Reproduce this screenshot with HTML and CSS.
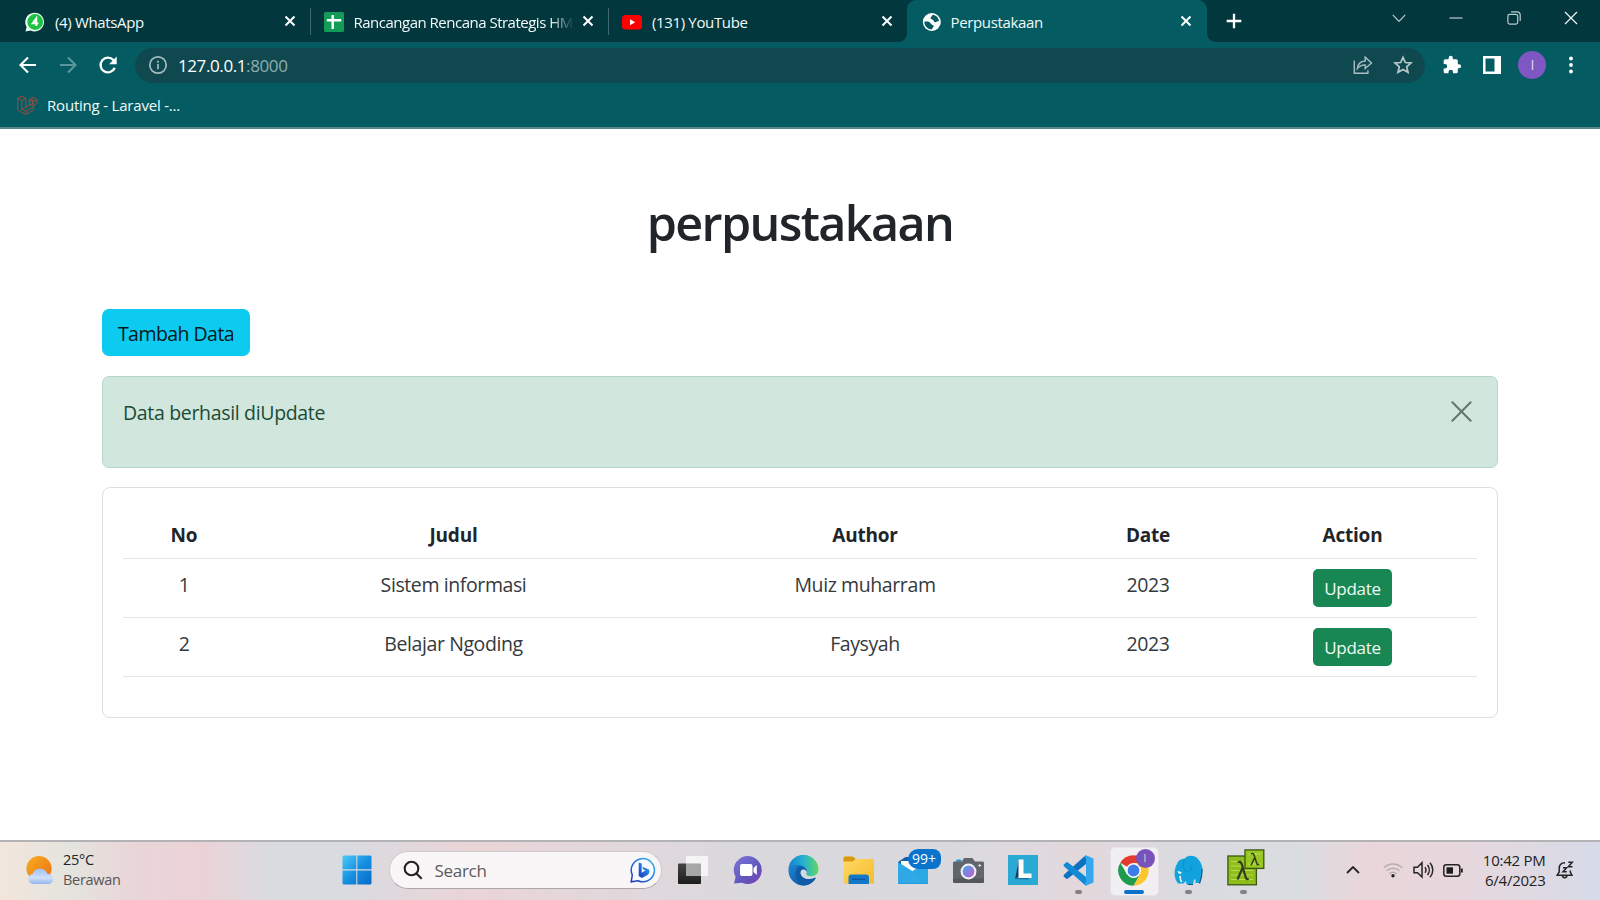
FILE: index.html
```html
<!DOCTYPE html>
<html lang="id">
<head>
<meta charset="utf-8">
<title>Perpustakaan</title>
<link rel="stylesheet" href="styles.css">
</head>
<body>
<div class="screen">
  <header class="browser">
    <div class="tabstrip">
      <div class="tab">
        <svg class="favicon" viewBox="0 0 20 20"><path d="M.5 19.600 1.600 15A9.400 9.400 0 1 1 5.600 18.600Z" fill="#e9fff0"/><circle cx="10.200" cy="10" r="7.900" fill="#1fc143"/><path d="M11.300 14V6.400L7.700 11.400H13.400" fill="none" stroke="#fff" stroke-width="1.900"/></svg>
        <span class="tab-title">(4) WhatsApp</span>
        <svg class="tab-close" viewBox="0 0 12 12"><path d="M1.500 1.500l9 9M10.500 1.500l-9 9"/></svg>
      </div>
      <div class="tab divided">
        <svg class="favicon" viewBox="0 0 20 20"><rect width="20" height="20" rx="1.500" fill="#139c58"/><path d="M2.800 8.300H17.200M8.700 3v14" stroke="#fff" stroke-width="2.400"/></svg>
        <span class="tab-title faded">Rancangan Rencana Strategis HM</span>
        <svg class="tab-close" viewBox="0 0 12 12"><path d="M1.500 1.500l9 9M10.500 1.500l-9 9"/></svg>
      </div>
      <div class="tab divided">
        <svg class="favicon" viewBox="0 0 20 20"><rect y="3" width="20" height="14.400" rx="3.500" fill="#f00"/><path d="M8 7.200v6l5.200-3z" fill="#fff"/></svg>
        <span class="tab-title">(131) YouTube</span>
        <svg class="tab-close" viewBox="0 0 12 12"><path d="M1.500 1.500l9 9M10.500 1.500l-9 9"/></svg>
      </div>
      <div class="tab active">
        <svg class="favicon" viewBox="0 0 20 20"><circle cx="10.800" cy="10" r="9" fill="#fff"/><path d="M3.300 9.700c2.500-.3 5.200-.2 6.200 1.500 1 1.900 2.600 1.300 3.200 2.700.3 1-1.500 1.500-1.600 3.300-4.200.4-7.700-3-7.800-7.500ZM11.600 2.700c-.6 1.800-2 2.200-2 3.300 0 1.500 1.700 1.200 2.600 2 .8.900.5 2.200 2 2.300 1.600.1 1.700-1.200 3.800-1.200-.300-3.400-3-6-6.400-6.400Z" fill="#045c62"/></svg>
        <span class="tab-title">Perpustakaan</span>
        <svg class="tab-close" viewBox="0 0 12 12"><path d="M1.500 1.500l9 9M10.500 1.500l-9 9"/></svg>
      </div>
      <svg class="new-tab" viewBox="0 0 16 16"><path d="M8 .7v14.600M.7 8h14.600"/></svg>
      <div class="window-controls">
        <svg viewBox="0 0 14 14"><path d="M.8 3.800 7 10.400l6.200-6.600"/></svg>
        <svg viewBox="0 0 14 14"><path d="M.5 7h13"/></svg>
        <svg viewBox="0 0 14 14"><rect x=".900" y="3.300" width="9.800" height="9.800" rx="1.800"/><path d="M4 .9h6a3.200 3.200 0 0 1 3.200 3.200V10"/></svg>
        <svg class="bright" viewBox="0 0 14 14"><path d="M1 1l12 12M13 1 1 13"/></svg>
      </div>
    </div>
    <div class="toolbar">
      <svg class="nav" viewBox="0 0 20 20"><path d="M18 10H2.800M10 2.500 2.500 10l7.500 7.500"/></svg>
      <svg class="nav dim" viewBox="0 0 20 20"><path d="M2 10h15.200M10 2.500l7.500 7.500-7.500 7.500"/></svg>
      <svg class="nav reload" viewBox="0 0 20 20"><path d="M16.800 12.800A7.400 7.400 0 1 1 15.600 5.200L17.200 6.900"/><path class="solid" d="M18.700 1.600v7.600h-7.600z"/></svg>
      <div class="omnibox">
        <svg class="info" viewBox="0 0 20 20"><circle cx="10" cy="10" r="8.200"/><path d="M10 9v5.300M10 5.700v2"/></svg>
        <span class="url">127.0.0.1<span class="port">:8000</span></span>
        <svg class="share" viewBox="0 0 20 20"><path d="M1.300 5.500v12.700h13.600v-3M4.300 13.700C4.800 9 7.600 6.200 12.200 6V2.200l6.300 5.700-6.300 5.600V9.900c-3.800 0-6 1.300-7.900 3.800Z"/></svg>
        <svg class="star" viewBox="0 0 20 20"><path d="M10 2.300l2.300 5.200 5.700.5-4.300 3.800 1.300 5.500L10 14.400l-5 2.900 1.300-5.500L2 8l5.700-.5z"/></svg>
      </div>
      <svg class="puzzle" viewBox="0 0 24 24"><path d="M20.500 11H19V7a2 2 0 0 0-2-2h-4V3.500a2.500 2.500 0 0 0-5 0V5H4a2 2 0 0 0-2 2v3.800h1.500a2.700 2.700 0 0 1 0 5.400H2V20a2 2 0 0 0 2 2h3.800v-1.500a2.700 2.700 0 0 1 5.400 0V22H17a2 2 0 0 0 2-2v-4h1.500a2.500 2.500 0 0 0 0-5z"/></svg>
      <svg class="sidepanel" viewBox="0 0 18 18"><path fill-rule="evenodd" d="M0 0h18v18H0zM2.500 2.500v13h9v-13z"/></svg>
      <span class="avatar">I</span>
      <svg class="dots" viewBox="0 0 6 18"><circle cx="3" cy="2.500" r="1.900"/><circle cx="3" cy="9" r="1.900"/><circle cx="3" cy="15.500" r="1.900"/></svg>
    </div>
    <div class="bookmarks">
      <svg class="laravel" viewBox="0 0 21 20"><path d="M.8 3.300 4.800 1l4 2.300v9L16 8.200V4.500l-3.600 2 0 4.200M.8 3.300v11.900l8 4.300 7.500-4.300v-3.900M.8 3.300l4 2.300 4-2.300M4.800 5.600v8.600l4 2.100v3.200M4.800 14.200l4-2M8.800 16.300l7.500-4.300M12.400 4.500 16.200 2.200l3.900 2.300v3.800L16.200 11l-3.800-2.300V4.500l3.800 2.200v4M16.200 6.700l3.900-2.200"/></svg>
      <span>Routing - Laravel -...</span>
    </div>
  </header>

  <main class="page">
    <h1 class="title">perpustakaan</h1>
    <button class="btn-add">Tambah Data</button>
    <div class="alert">
      <p class="alert-text">Data berhasil diUpdate</p>
      <svg class="alert-close" viewBox="0 0 20 20"><path d="M1.300 1.300l17.400 17.400M18.700 1.300 1.300 18.700"/></svg>
    </div>
    <section class="card">
      <div class="row head"><span>No</span><span>Judul</span><span>Author</span><span>Date</span><span>Action</span></div>
      <div class="row"><span>1</span><span>Sistem informasi</span><span>Muiz muharram</span><span>2023</span><button class="btn-update">Update</button></div>
      <div class="row"><span>2</span><span>Belajar Ngoding</span><span>Faysyah</span><span>2023</span><button class="btn-update">Update</button></div>
    </section>
  </main>

  <footer class="taskbar">
    <div class="weather">
      <svg class="weather-icon" viewBox="0 0 28 28"><defs><linearGradient id="sun" x1="0" y1="0" x2="1" y2="1"><stop offset="0" stop-color="#f5b01f"/><stop offset="1" stop-color="#ee6c16"/></linearGradient><linearGradient id="cloud" x1="0" y1="0" x2="0" y2="1"><stop offset="0" stop-color="#9fc2f3"/><stop offset=".6" stop-color="#cfe0fb"/><stop offset="1" stop-color="#93b4ec"/></linearGradient></defs><circle cx="13" cy="12.600" r="12.600" fill="url(#sun)"/><path d="M7 28a5 5 0 0 1-.5-9.900A8 8 0 0 1 21.500 18 5 5 0 0 1 23 28z" fill="url(#cloud)"/></svg>
      <div class="weather-text"><span>25°C</span><span class="muted">Berawan</span></div>
    </div>
    <div class="cell start">
      <svg width="30" height="30" viewBox="0 0 30 30"><defs><linearGradient id="win" x1="0" y1="0" x2="1" y2="1"><stop offset="0" stop-color="#4cc9f8"/><stop offset=".5" stop-color="#1590e0"/><stop offset="1" stop-color="#0669c8"/></linearGradient></defs><path d="M1.500.5H14.300V14.300H.5V1.500zM15.300.5H28.500L29.500 1.500V14.300H15.300zM.5 15.600H14.300V29.500H1.500L.5 28.500zM15.300 15.600H29.500V28.500L28.500 29.500H15.300z" fill="url(#win)"/></svg>
    </div>
    <div class="search">
      <svg class="lens" viewBox="0 0 20 20"><circle cx="8.500" cy="8.500" r="6.800"/><path d="M13.400 13.400l5.300 5.300"/></svg>
      <span class="search-text">Search</span>
      <svg class="bing" viewBox="0 0 26 26"><defs><linearGradient id="bing" x1="1" y1="0" x2="0" y2="1"><stop offset="0" stop-color="#39bdec"/><stop offset=".45" stop-color="#2378e0"/><stop offset="1" stop-color="#2434b8"/></linearGradient></defs><path d="M1.200 24.800 2.300 18A11.600 11.600 0 1 1 8 23.700z" fill="#f7fbff" stroke="url(#bing)" stroke-width="1.500"/><path d="M8.700 5.500 11.700 6.600V15.700L15.500 13.500 13.400 12.500 12.300 9.700 19 12.500C20.300 15.200 19 17 17.500 17.900L11.900 21 8.700 19z" fill="url(#bing)"/></svg>
    </div>
    <div class="apps">
      <div class="cell"><svg width="30" height="28" viewBox="0 0 30 28"><defs><linearGradient id="dk" x1="0" y1="0" x2="0" y2="1"><stop offset="0" stop-color="#444"/><stop offset="1" stop-color="#1d1d1d"/></linearGradient></defs><rect y="7.500" width="23" height="20.500" rx="1" fill="url(#dk)"/><rect x="8" width="22" height="20" rx="1" fill="#f7f7f7" opacity=".9"/><path d="M8 7.500H22a1 1 0 0 1 1 1V20H9a1 1 0 0 1-1-1z" fill="#a6a6a6"/></svg></div>
      <div class="cell"><svg width="30" height="30" viewBox="0 0 30 30"><defs><linearGradient id="chat" x1="0" y1="0" x2="1" y2="1"><stop offset="0" stop-color="#7d76d8"/><stop offset=".6" stop-color="#6057bd"/><stop offset="1" stop-color="#7a3fae"/></linearGradient></defs><path d="M1 28.500 2.600 22A14 14 0 1 1 9 27.800z" fill="url(#chat)"/><rect x="7" y="9" width="12.500" height="12" rx="2" fill="#fff"/><path d="M20.500 13 23.800 10V20L20.500 17z" fill="#fff"/></svg></div>
      <div class="cell"><svg width="31" height="31" viewBox="0 0 31 31"><defs><linearGradient id="ea" x1="0" y1=".3" x2="1" y2=".3"><stop offset="0" stop-color="#1a7fd0"/><stop offset=".5" stop-color="#24b2d3"/><stop offset="1" stop-color="#60d860"/></linearGradient><linearGradient id="eb" x1="0" y1="0" x2="1" y2="1"><stop offset="0" stop-color="#1a87d6"/><stop offset="1" stop-color="#0c4a94"/></linearGradient></defs><path d="M.5 15A15 15 0 0 1 30.500 14.500C30.500 19 27 21.300 23 21.300 19 21.300 18 19.800 18.400 18.600 20.500 14.500 16 11 11 11.300 6 11.500 2 13 .5 15z" fill="url(#ea)"/><path d="M.5 16C.7 11.500 6 9.300 11 10 16 10.500 19.500 13.500 19 17 17.500 13.500 13 13.500 12 17.500 11.500 22.500 18 26.500 27.500 22.500 25 27.500 20.500 30.500 15.500 30.500A15 15 0 0 1 .5 16z" fill="url(#eb)"/><path d="M10 12C5.500 17 7 27 15 30.500 24 30.500 27.500 24 28 22.500 20 27 12 22.500 12.500 17 13 13.500 16 13 18 14 15.500 11.500 12.500 11.200 10 12z" fill="#0f5ba6"/></svg></div>
      <div class="cell"><svg width="31" height="28" viewBox="0 0 31 28"><defs><linearGradient id="fold" x1="0" y1="0" x2="1" y2="1"><stop offset="0" stop-color="#ffdb68"/><stop offset="1" stop-color="#f6bb2b"/></linearGradient></defs><path d="M.5 2A1.500 1.500 0 0 1 2 .5H9.500L13 3H30A1 1 0 0 1 31 4V27.500H.5z" fill="url(#fold)"/><path d="M.5 2A1.500 1.500 0 0 1 2 .5H9.500L12.800 3 9.500 5.500H.5z" fill="#d9980f"/><path d="M5.500 28V21.500A3 3 0 0 1 8.500 18.500H23A3 3 0 0 1 26 21.500V28z" fill="#1478c8"/><path d="M9 23.300H22" stroke="#0b569e" stroke-width="1.200"/></svg></div>
      <div class="cell mail"><svg width="30" height="27" viewBox="0 0 30 27"><path d="M0 5 15-5 30 5V14H0z" fill="#165ea9"/><path d="M3 4H27V12L15 19 3 10z" fill="#fff"/><path d="M30 5V27H1A1 1 0 0 1 0 26L16 13z" fill="#28a8e4"/><path d="M14 14.600 30 26.500 29 27H1L0 26z" fill="#1c8cd4"/><path d="M0 5 15 14.500 30 26.500H0z" fill="#2fa9e6"/></svg><span class="badge">99+</span></div>
      <div class="cell"><svg width="31" height="25" viewBox="0 0 31 25"><path d="M3 3.500V2.500L4 1.500H7.500L8.500 2.500V4z" fill="#1e91d6"/><path d="M1 3.500H9L11 0H19.500L22 3.500H30L31 4.500V24L30 25H1L0 24V4.500z" fill="#62666b"/><path d="M0 20.500H31V24L30 25H1L0 24z" fill="#54585c"/><circle cx="15.500" cy="13.500" r="7.900" fill="#f5f5f7"/><defs><linearGradient id="cam" x1="0" y1="0" x2="1" y2="1"><stop offset="0" stop-color="#47a8e8"/><stop offset="1" stop-color="#c659cf"/></linearGradient></defs><circle cx="15.500" cy="13.500" r="5.900" fill="url(#cam)"/><path d="M25.200 7.500H28.200M26.700 6V9" stroke="#ddd" stroke-width="1"/></svg></div>
      <div class="cell"><svg width="30" height="30" viewBox="0 0 30 30"><rect width="30" height="30" fill="#2aa9d5"/><path d="M11 4.500 7 24 11 21z" fill="#173b5c"/><path d="M7 24 11 21H23L20 24.500z" fill="#1b6f9d"/><path d="M10.500 4.500H15.500V18.500H23.500V23H10.500z" fill="#fff"/></svg></div>
      <div class="cell"><svg width="31" height="31" viewBox="0 0 31 31"><path d="M23 .5V9L5 23.500Q3.500 24.500 2.500 23L.8 21.500Q0 20.500 1.200 19.500L21.500 1.200z" fill="#0b73bd"/><path d="M23 30.500V22L5 7.500Q3.500 6.500 2.500 8L.8 9.500Q0 10.500 1.200 11.500L21.500 29.800z" fill="#138ad6"/><path d="M23 .3 30.500 3.500V27.500L23 30.700 21 29.500 23 28V3L21 1.500z" fill="#35a7ee"/></svg><i class="run-mark"></i></div>
      <div class="cell current"><svg width="31" height="31" viewBox="0 0 31 31"><path d="M15.500 15.500 2.300 7.800A15.200 15.200 0 0 1 28.700 7.900z" fill="#e33b2e"/><path d="M15.500 8H28.700A15.200 15.200 0 0 1 15.500 30.700L22 19z" fill="#fcc62d"/><path d="M2.300 7.800A15.200 15.200 0 0 0 15.500 30.700L22 19 9 19.500z" fill="#1f9b4c"/><circle cx="15.500" cy="15.500" r="7.400" fill="#fff"/><circle cx="15.500" cy="15.500" r="5.900" fill="#3d7deb"/></svg><span class="profile">I</span><i class="run-mark wide"></i></div>
      <div class="cell"><svg width="29" height="30" viewBox="0 0 29 30"><path d="M3 9C5 4 9 3.500 11 3.500 13-.5 21 0 24 4 28 8 29.500 14 28 20L25.500 28H21.500V24.500H20L19 29.500H12.500L12 26 9.500 28.500H4L3 27C-.5 22 0 14 3 9z" fill="#12a3df"/><path d="M11 4C8 8 9 15 13 17 17 17 18 13 18 10" fill="none" stroke="#0c85bf" stroke-width=".8"/><path d="M3.500 16 7.500 17 7 19 4.500 18.500zM5 21.500 7 20.500V24L8.500 27H6.500z" fill="#e9f7fc"/><path d="M28 14 27.500 22 25.500 28.500M14 29.500H19" fill="none" stroke="#16577c" stroke-width="1.200"/></svg><i class="run-mark"></i></div>
      <div class="cell lambda"><svg width="38" height="37" viewBox="0 0 38 37"><g stroke="#3a5713" stroke-width="1.300"><rect x=".900" y="7" width="28.500" height="28.800" fill="#8fbe1c"/><rect x="18" y=".900" width="18.800" height="18.500" fill="#98c722"/></g><path d="M4 12.500H16M4 17H16M4 21.500H26M4 26H26M4 30.500H26M21 5H34M21 15H34" stroke="#b7dc52" stroke-width="1"/><path d="M11 13.500Q13.500 11.500 14.700 15L19 29Q20 31 21.500 29.500M15.500 19 10.500 30.500" fill="none" stroke="#343c1e" stroke-width="2.200"/><path d="M24 5Q26 3.500 27 6L30 15Q30.800 16.300 32 15M27.500 9 24 16.300" fill="none" stroke="#343c1e" stroke-width="1.500"/></svg><i class="run-mark"></i></div>
    </div>
    <div class="tray">
      <svg class="chev" viewBox="0 0 14 8"><path d="M1 7l6-6 6 6"/></svg>
      <svg class="wifi" viewBox="0 0 20 16"><g stroke="#b9aeb2"><path d="M.8 5.800a13 13 0 0 1 18.400 0M3.600 8.800a9 9 0 0 1 12.800 0M6.400 11.700a5 5 0 0 1 7.200 0"/></g><circle cx="10" cy="13.800" r="1.700" fill="#222" stroke="none"/></svg>
      <svg class="speaker" viewBox="0 0 21 18"><path d="M1 6.200H4.500L9 1.700V16L4.500 11.700H1zM12 6.300a4.500 4.500 0 0 1 0 5.400M14.500 4a8 8 0 0 1 0 10M17 1.700a11 11 0 0 1 0 14.600"/></svg>
      <svg class="battery" viewBox="0 0 20 13"><rect x=".8" y=".8" width="16" height="11.400" rx="2.500"/><rect x="3.500" y="3.300" width="6.500" height="6.400" fill="#1c1c1c" stroke="none"/><path d="M18.800 4.500v4" stroke-width="2"/></svg>
      <div class="clock"><span>10:42 PM</span><span>6/4/2023</span></div>
      <svg class="bell" viewBox="0 0 18 18"><path d="M9 1.700C5 1.700 3.200 4.300 3.200 7.500V11L1.200 14.300H16L14.300 11V9.500M6.500 14.500a2.200 2.200 0 0 0 4.400 0M7 6.800h3.600L7 10.800h3.800M12.300 1.200h4L12.300 5.800h4.200"/></svg>
    </div>
  </footer>
</div>
</body>
</html>
```
FILE: styles.css
```css
* { box-sizing: border-box; }
body { margin: 0; font-family: "Open Sans", "Noto Sans", sans-serif; background: #fff; color: #212529; }
svg { display: block; flex: none; }
button { font-family: inherit; border: 0; padding: 0; }
.screen { width: 1600px; height: 900px; display: flex; flex-direction: column; overflow: hidden; }

/* Browser window */
.browser { height: 129px; background: #045c62; border-bottom: 2px solid #56888b; color: #f2fafa; flex: none; }
.tabstrip { height: 42px; background: #02373d; display: flex; align-items: center; padding-left: 11px; }
.tab { position: relative; width: 298.500px; height: 42px; padding: 0 13.500px 0 14px; display: flex; align-items: center; gap: 10px; }
.favicon { width: 20px; height: 20px; margin-top: 1px; }
.tab-title { flex: 1; font-size: 15px; letter-spacing: -.35px; white-space: nowrap; overflow: hidden; line-height: 22px; padding-top: 1px; }
.faded { letter-spacing: -.5px; max-width: 226px; margin-right: -8px; -webkit-mask-image: linear-gradient(90deg, #000 196px, transparent 220px); mask-image: linear-gradient(90deg, #000 196px, transparent 220px); }
.tab-close { width: 12px; height: 12px; fill: none; stroke: #fff; stroke-width: 2; }
.divided { padding-left: 13px; border-left: 1px solid transparent; border-image: linear-gradient(#0000 9px, #3f686c 9px 34px, #0000 34px) 1; }
.active { width: 300px; padding-right: 15px; background: #045c62; border-radius: 9px 9px 0 0; }
.active::before, .active::after { content: ""; position: absolute; bottom: 0; width: 8px; height: 8px; }
.active::before { left: -8px; background: radial-gradient(circle at 0 0, #02373d 7.500px, #045c62 8px); }
.active::after { right: -8px; background: radial-gradient(circle at 100% 0, #02373d 7.500px, #045c62 8px); }
.new-tab { width: 16px; height: 16px; margin-left: 19px; stroke: #fff; stroke-width: 2.300; }
.window-controls { margin: 0 22px 6px auto; display: flex; gap: 43.400px; }
.window-controls svg { width: 14px; height: 14px; fill: none; stroke: #b9cccd; stroke-width: 1.200; }
.window-controls .bright { stroke: #f0f5f5; }

.toolbar { height: 46px; padding: 0 24.500px 0 17.500px; display: flex; align-items: center; }
.nav { width: 20px; height: 20px; margin-right: 20.300px; fill: none; stroke: #fff; stroke-width: 2.100; }
.nav.dim { stroke: #5a979b; }
.nav.reload { margin-right: 16.900px; stroke-width: 2.300; }
.nav .solid { fill: #fff; stroke: none; }
.omnibox { width: 1290px; height: 35px; border-radius: 18px; background: #0f484f; display: flex; align-items: center; padding: 0 12px; }
.info { width: 20px; height: 20px; margin-left: 1px; fill: none; stroke: #a5bcbf; stroke-width: 1.700; }
.url { margin-left: 10px; flex: 1; font-size: 17px; letter-spacing: -.4px; color: #fff; }
.port { color: #91aeb1; }
.share { width: 20px; height: 20px; fill: none; stroke: #a9bec0; stroke-width: 1.400; }
.star { width: 20px; height: 20px; margin-left: 20px; fill: none; stroke: #b9c9cb; stroke-width: 1.700; }
.puzzle { width: 20px; height: 20px; margin-left: 17.500px; fill: #fff; }
.sidepanel { width: 18px; height: 18px; margin-left: 20.500px; fill: #fff; }
.avatar { width: 28px; height: 28px; margin-left: 17.500px; border-radius: 50%; background: #7e57c2; color: #e4d9f4; font-size: 14px; line-height: 28px; text-align: center; }
.dots { width: 6px; height: 18px; margin-left: 22px; fill: #fff; }
.bookmarks { height: 34px; padding-left: 17px; display: flex; align-items: center; gap: 9px; font-size: 15px; letter-spacing: -.2px; line-height: 20px; padding-bottom: 1px; }
.laravel { width: 21px; height: 20px; fill: none; stroke: #9c4a40; stroke-width: 1; }

/* Library page */
.page { flex: 1; padding: 63px 102px 0; }
.title { margin: 0; height: 60px; font-size: 48.500px; font-weight: 600; line-height: 60px; letter-spacing: -1.600px; text-align: center; color: #212529; }
.btn-add { display: block; margin-top: 57px; width: 148px; height: 47px; border-radius: 7px; background: #0dcaf0; color: #06181c; font-size: 19.500px; letter-spacing: -.55px; line-height: 50px; }
.alert { margin-top: 20px; height: 92px; border: 1px solid #b5d6c6; border-radius: 7px; background: #d1e7dd; display: flex; justify-content: space-between; padding: 19px 25px 0 20px; }
.alert-text { margin: 0; font-size: 19.500px; line-height: 34px; letter-spacing: -.33px; color: #1b4b34; }
.alert-close { width: 21px; height: 21px; margin-top: 5px; fill: none; stroke: #66776f; stroke-width: 2; stroke-linecap: round; }
.card { margin-top: 19px; height: 231px; border: 1px solid #dedfe0; border-radius: 8px; padding: 20px; }
.row { height: 59px; display: grid; grid-template-columns: 122px 417px 406px 160px 249px; justify-items: center; border-bottom: 1px solid #e3e6e9; font-size: 19.500px; line-height: 30px; letter-spacing: -.4px; padding-top: 11px; color: #34393d; }
.row.head { height: 51px; padding-top: 12px; font-size: 19px; letter-spacing: -.2px; font-weight: 700; color: #212529; }
.btn-update { width: 79px; height: 38px; margin-top: -1px; border-radius: 5px; background: #198754; color: #f0fbf5; font-size: 17px; letter-spacing: -.3px; line-height: 39px; }

/* Taskbar */
.taskbar { height: 60px; flex: none; display: flex; border-top: 2px solid #b3b3b6; background: linear-gradient(90deg, #f3e6dc 0, #e4e4de 70px, #e9d6d9 130px, #ebd2d6 200px, #dadbe0 270px, #d9dbe0 350px, #ead4d7 470px, #e0d8dc 640px, #d9d9dd 760px, #dadade 960px, #e2d8dc 1080px, #d9dbe0 1200px, #dadde0 1300px, #ead6da 1370px, #e5d8de 1480px, #d6dbe8 1600px); color: #222; }
.weather { width: 329.500px; padding: 14px 0 0 26px; display: flex; gap: 9px; }
.weather-icon { width: 28px; height: 28px; }
.weather-text { display: flex; flex-direction: column; margin-top: -6px; font-size: 14.500px; line-height: 20px; letter-spacing: -.3px; }
.muted { color: #595558; }
.cell { position: relative; width: 55px; height: 56px; display: flex; align-items: center; justify-content: center; }
.search { width: 272.500px; height: 38px; margin: 9px 4px 0 4.500px; border-radius: 19px; background: #f9f6f7; border: 1px solid #cfc9cc; border-bottom-color: #aca7aa; display: flex; align-items: center; padding: 0 5px 0 12.500px; }
.lens { width: 20px; height: 20px; fill: none; stroke: #222; stroke-width: 2.100; }
.search-text { flex: 1; margin-left: 12px; font-size: 17px; letter-spacing: -.3px; color: #5d5a5c; }
.bing { width: 26px; height: 26px; }
.apps { display: flex; }
.badge { position: absolute; top: 7px; left: 22px; width: 33px; height: 20px; border-radius: 10px 8px 8px 10px; background: #0a73cc; color: #fff; font-size: 14px; line-height: 20px; text-align: center; }
.mail svg { margin-top: 1px; }
.run-mark { position: absolute; bottom: 4px; left: 24px; width: 7px; height: 4px; border-radius: 2px; background: #818184; }
.run-mark.wide { left: 18px; width: 20px; background: #0b71c9; }
.current::before { content: ""; position: absolute; left: 4px; top: 5px; width: 47px; height: 47px; border-radius: 5px; background: #f1eff1; border: 1px solid #e6e3e6; }
.current svg { position: relative; }
.profile { position: absolute; left: 30px; top: 7px; width: 19px; height: 19px; border-radius: 50%; background: #7a52bb; color: #ddd; font-size: 10px; line-height: 19px; text-align: center; }
.lambda svg { margin: -5px 0 0 5px; }
.tray { flex: 1; display: flex; align-items: center; height: 56px; padding-left: 75px; }
.tray svg { fill: none; stroke: #262425; stroke-width: 1.500; }
.chev { width: 14px; height: 8px; }
.tray .chev { stroke-width: 1.800; }
.wifi { width: 20px; height: 16px; margin-left: 23px; }
.speaker { width: 21px; height: 18px; margin-left: 10px; }
.battery { width: 20px; height: 13px; margin-left: 9px; }
.clock { width: 83px; display: flex; flex-direction: column; text-align: right; font-size: 15px; line-height: 20px; letter-spacing: -.25px; }
.bell { width: 18px; height: 18px; margin-left: 10.500px; }
```
